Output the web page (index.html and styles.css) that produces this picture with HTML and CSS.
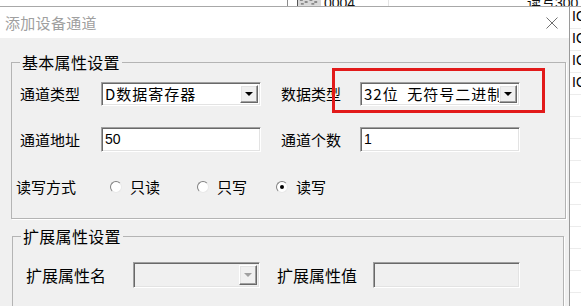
FILE: index.html
```html
<!DOCTYPE html>
<html lang="zh-CN">
<head>
    <meta charset="UTF-8">
    <title>添加设备通道</title>
    <link rel="stylesheet" href="styles.css">
</head>
<body>
<div class="back-strip">
    <div class="cell cell-a"></div>
    <div class="cell cell-b">
        <svg class="dev-icon" width="24" height="8" viewBox="0 0 24 8">
            <rect x="0" y="0" width="24" height="8" fill="#d8d8d8"/>
            <path d="M2 1h3v2h-3zM7 3h3v2h-3zM12 1h3v2h-3zM17 3h3v2h-3zM3 5h3v2h-3zM14 5h3v2h-3z" fill="#8a8a8a"/>
        </svg>
        <span class="back-text">0004</span>
    </div>
    <div class="cell cell-c"><span class="back-text">读写300</span></div>
</div>
<div class="desk">
    <div class="dialog">
        <div class="titlebar">
            <span class="title">添加设备通道</span>
            <svg class="close" width="12" height="12" viewBox="0 0 12 12">
                <path d="M0.5 0.5L11.5 11.5M11.5 0.5L0.5 11.5" stroke="#707070" stroke-width="1" fill="none"/>
            </svg>
        </div>
        <div class="client">
            <fieldset class="group basic">
                <legend>基本属性设置</legend>
                <div class="form-grid">
                    <label>通道类型</label>
                    <div class="combo"><span class="combo-text">D数据寄存器</span><span class="drop"><i></i></span></div>
                    <label class="second">数据类型</label>
                    <div class="combo"><span class="combo-text">32位&nbsp; 无符号二进制</span><span class="drop"><i></i></span></div>
                    <label>通道地址</label>
                    <div class="edit">50</div>
                    <label class="second">通道个数</label>
                    <div class="edit">1</div>
                </div>
                <div class="rw-row">
                    <span class="rw-label">读写方式</span>
                    <span class="opt opt1"><span class="radio"></span>只读</span>
                    <span class="opt opt2"><span class="radio"></span>只写</span>
                    <span class="opt"><span class="radio checked"></span>读写</span>
                </div>
            </fieldset>
            <fieldset class="group ext">
                <legend>扩展属性设置</legend>
                <div class="ext-grid">
                    <label>扩展属性名</label>
                    <div class="combo disabled"><span class="combo-text"></span><span class="drop"><i></i></span></div>
                    <label class="second">扩展属性值</label>
                    <div class="edit disabled"></div>
                </div>
            </fieldset>
        </div>
    </div>
    <div class="side">
        <div class="side-row">IO</div>
        <div class="side-row">IO</div>
        <div class="side-row">IO</div>
        <div class="side-row">IO</div>
        <div class="side-row"></div>
        <div class="side-row"></div>
        <div class="side-row"></div>
        <div class="side-row"></div>
        <div class="side-row"></div>
        <div class="side-row"></div>
        <div class="side-row"></div>
        <div class="side-row"></div>
        <div class="side-row"></div>
        <div class="side-row"></div>
    </div>
</div>
<div class="highlight"></div>
</body>
</html>
```

FILE: styles.css
```css
*{
    margin: 0;
    padding: 0;
    box-sizing: border-box;
}
body{
    width: 581px;
    height: 306px;
    overflow: hidden;
    position: relative;
    background: #fff;
    font-family: "Noto Sans CJK SC", "Liberation Sans", sans-serif;
    font-size: 15px;
    color: #000;
}
/* 后面窗口露出的部分 */
.back-strip{
    height: 7px;
    display: flex;
    overflow: hidden;
    border-bottom: 1px solid #a8a8a8;
    background: #fff;
}
.cell{
    height: 6px;
    display: flex;
    align-items: flex-end;
    overflow: hidden;
}
.cell-a{
    width: 287px;
}
.cell-b{
    width: 101px;
    border-left: 1px solid #8c8c8c;
    padding-left: 9px;
}
.cell-c{
    flex: 1;
    border-left: 1px solid #e4e4e4;
    padding-left: 138px;
}
.dev-icon{
    border-left: 1px solid #555;
    margin-right: 3px;
    flex: none;
}
.back-text{
    font-family: "Liberation Sans", "Noto Sans CJK SC", sans-serif;
    font-size: 14px;
    line-height: 14px;
    margin-bottom: -4px;
    white-space: nowrap;
    color: #111;
}
.desk{
    display: flex;
    height: 299px;
    overflow: hidden;
}
.dialog{
    width: 570px;
    flex: none;
    border-right: 1px solid #9a9a9a;
    background: #f0f0f0;
}
.titlebar{
    height: 31px;
    background: #fff;
    display: flex;
    align-items: center;
    justify-content: space-between;
    padding: 0 11px 0 5px;
}
.title{
    color: #a0a0a0;
    font-size: 15px;
    line-height: 20px;
    letter-spacing: 0.3px;
}
.close{
    display: block;
    margin-top: 1px;
}
.client{
    padding: 14px 0 0 11px;
}
.group{
    border: 1px solid #b4b4b4;
    box-shadow: 1px 1px 0 #fff;
}
.group legend{
    font-size: 16px;
    line-height: 20px;
    padding: 0 2px;
    letter-spacing: 0.3px;
}
.basic{
    width: 555px;
    padding: 10px 0 21px 8px;
}
.form-grid{
    display: grid;
    grid-template-columns: 81px 160px 99px 160px;
    grid-template-rows: 24px 25px;
    row-gap: 21px;
    align-items: center;
}
.form-grid label,
.ext-grid label{
    line-height: 20px;
    white-space: nowrap;
}
.form-grid label.second{
    padding-left: 20px;
}
.combo{
    height: 24px;
    display: flex;
    padding: 1px;
    border: 1px solid;
    border-color: #a0a0a0 #fff #fff #a0a0a0;
    box-shadow: inset 1px 1px 0 #696969, inset -1px -1px 0 #e3e3e3;
    background: #fff;
}
.combo-text{
    flex: 1;
    overflow: hidden;
    white-space: nowrap;
    line-height: 20px;
    padding-left: 2px;
    letter-spacing: 1px;
}
.drop{
    width: 18px;
    flex: none;
    margin: 1px 1px 1px 0;
    display: flex;
    align-items: center;
    justify-content: center;
    background: #f0f0f0;
    border: 1px solid;
    border-color: #fff #696969 #696969 #fff;
    box-shadow: inset -1px -1px 0 #a0a0a0, inset 1px 1px 0 #e3e3e3;
}
.drop i{
    width: 0;
    height: 0;
    border-left: 4px solid transparent;
    border-right: 4px solid transparent;
    border-top: 4px solid #000;
}
.edit{
    height: 25px;
    padding: 0 3px;
    border: 1px solid;
    border-color: #a0a0a0 #fff #fff #a0a0a0;
    box-shadow: inset 1px 1px 0 #696969, inset -1px -1px 0 #e3e3e3;
    background: #fff;
    line-height: 23px;
    font-family: "Liberation Sans", "Noto Sans CJK SC", sans-serif;
    font-size: 14px;
}
.combo.disabled,
.edit.disabled{
    background: #f0f0f0;
}
.combo.disabled .drop i{
    border-top-color: #a0a0a0;
}
.rw-row{
    display: flex;
    align-items: center;
    height: 20px;
    margin: 25px 0 0 -4px;
}
.rw-label{
    width: 94px;
    line-height: 20px;
}
.opt{
    display: flex;
    align-items: center;
    gap: 8px;
    line-height: 20px;
}
.opt1{
    width: 87px;
}
.opt2{
    width: 79px;
}
.radio{
    width: 12px;
    height: 12px;
    border-radius: 50%;
    border: 1px solid;
    border-color: #808080 #e8e8e8 #e8e8e8 #808080;
    background: #fff;
    display: flex;
    align-items: center;
    justify-content: center;
}
.radio.checked::after{
    content: "";
    width: 4px;
    height: 4px;
    border-radius: 50%;
    background: #000;
}
.ext{
    width: 552px;
    margin: 7px 0 0 1px;
    padding: 16px 0 20px 8px;
}
.ext-grid{
    display: grid;
    grid-template-columns: 112px 127px 113px 147px;
    grid-template-rows: 26px;
    align-items: center;
}
.ext-grid label{
    padding-left: 5px;
    font-size: 16px;
}
.ext-grid label.second{
    padding-left: 17px;
}
.ext-grid .combo,
.ext-grid .edit{
    height: 26px;
}
.side{
    flex: 1;
    background: #fff;
    overflow: hidden;
}
.side-row{
    height: 22px;
    line-height: 19px;
    padding-left: 2px;
    border-bottom: 1px solid #ececec;
    font-family: "Liberation Sans", sans-serif;
    font-size: 14px;
    white-space: nowrap;
}
/* 红色标注框 */
.highlight{
    position: absolute;
    left: 332px;
    top: 68px;
    width: 213px;
    height: 45px;
    border: 3px solid #e21a1a;
}
```
